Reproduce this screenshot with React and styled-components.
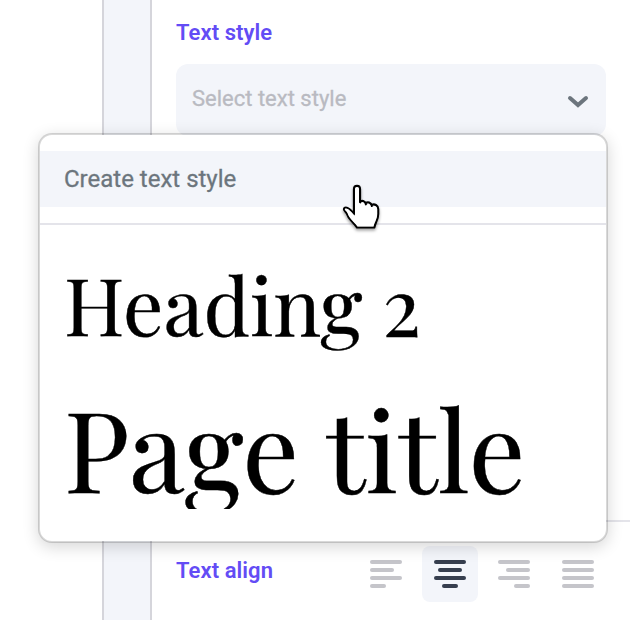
import styled, {createGlobalStyle} from 'styled-components'


const GlobalStyle = createGlobalStyle`
    * {
        box-sizing:border-box;
    }
    body{
        margin:0;
        background-color:#FFFFFF;
        font-family:Roboto, "Liberation Sans", sans-serif;
    }
`;
const Page = styled.div`
    position:relative;
    display:grid;
    grid-template-columns:102px 50px 1fr;
    width:630px;
    height:620px;
    overflow:hidden;
`;
const Gutter = styled.div`
    grid-column:2;
    background-color:#F3F5FA;
    border-left:2px solid #D5D5DB;
    border-right:2px solid #D5D5DB;
`;
const Panel = styled.div`
    display:flex;
    flex-direction:column;
    justify-content:space-between;
`;
const Section = styled.div`
    padding:19px 24px 0px;
`;
const Label = styled.div`
    color:#634CF5;
    font-size:22px;
    font-weight:600;
    line-height:28px;
    letter-spacing:0.06px;
`;
const Select = styled.div`
    display:flex;
    align-items:center;
    justify-content:space-between;
    height:72px;
    margin-top:17px;
    padding:0px 16px;
    background-color:#F3F5FA;
    border-radius:12px;
`;
const Placeholder = styled.span`
    color:#B9BAC1;
    font-size:22px;
    line-height:28px;
    padding-bottom:2px;
    -webkit-text-stroke:0.3px currentColor;
`;
const AlignRow = styled.div`
    display:flex;
    align-items:flex-start;
    justify-content:space-between;
    height:100px;
    padding:24px 24px 0px;
    border-top:2px solid #E4E4EA;
`;
const AlignLabel = styled(Label)`
    margin-top:11px;
`;
const AlignButtons = styled.div`
    display:flex;
    gap:8px;
    margin-right:-16px;
    padding-right:16px;
`;
const AlignButton = styled.button`
    display:flex;
    flex-direction:column;
    align-items:${props => props.$align};
    gap:4px;
    width:56px;
    height:56px;
    padding:14px 12px;
    border:none;
    border-radius:8px;
    background-color:${props => props.$active ? '#F3F5FA' : 'transparent'};
    color:${props => props.$active ? '#363E4E' : '#C5C5CA'};
`;
const Line = styled.span`
    width:${props => props.$width}px;
    height:4px;
    border-radius:2px;
    background-color:currentColor;
`;
const Menu = styled.div`
    position:absolute;
    left:38px;
    top:133px;
    width:570px;
    height:410px;
    padding-top:16px;
    background-color:#FFFFFF;
    background-clip:padding-box;
    border:2px solid rgba(0,0,0,0.15);
    border-radius:14px;
    box-shadow:0px 4px 16px rgba(0,0,0,0.16);
`;
const CreateItem = styled.div`
    height:56px;
    padding:0px 24px;
    background-color:#F3F5FA;
    color:#6C757D;
    font-size:24px;
    line-height:56px;
    -webkit-text-stroke:0.3px currentColor;
`;
const StyleList = styled.div`
    display:flex;
    flex-direction:column;
    gap:29px;
    margin-top:16px;
    padding:26px 24px 32px;
    border-top:2px solid #E4E4EA;
`;
const StyleItem = styled.div`
    height:${props => props.$height}px;
    overflow:hidden;
    color:#000000;
    font-family:"Playfair Display", "Liberation Serif", serif;
    font-size:${props => props.$size}px;
    line-height:${props => props.$height}px;
    white-space:nowrap;
    -webkit-text-stroke:0.4px currentColor;
`;
const Cursor = styled.svg`
    position:absolute;
    left:330px;
    top:170px;
    filter:drop-shadow(0px 2px 1.5px rgba(0,0,0,0.4));
`;

const aligns = [
    {name:'left', align:'flex-start', lines:[32,24,32,16]},
    {name:'center', align:'center', lines:[32,24,32,16]},
    {name:'right', align:'flex-end', lines:[32,24,32,16]},
    {name:'justify', align:'center', lines:[32,32,32,32]},
]

function App() {
    return(
        <>
            <GlobalStyle/>
            <Page>
                <Gutter/>
                <Panel>
                    <Section>
                        <Label>Text style</Label>
                        <Select>
                            <Placeholder>Select text style</Placeholder>
                            <svg width="24" height="24" viewBox="0 0 24 24" fill="none" stroke="#6C757D" strokeWidth="4" strokeLinecap="round">
                                <path d="M4 10L12 17L20 10"/>
                            </svg>
                        </Select>
                    </Section>
                    <AlignRow>
                        <AlignLabel>Text align</AlignLabel>
                        <AlignButtons>
                            {aligns.map(item => (
                                <AlignButton key={item.name} $align={item.align} $active={item.name === 'center'}>
                                    {item.lines.map((width, i) => <Line key={i} $width={width}/>)}
                                </AlignButton>
                            ))}
                        </AlignButtons>
                    </AlignRow>
                </Panel>
                <Menu>
                    <CreateItem>Create text style</CreateItem>
                    <StyleList>
                        <StyleItem $size={80} $height={104}>Heading 2</StyleItem>
                        <StyleItem $size={112} $height={125}>Page title</StyleItem>
                    </StyleList>
                </Menu>
                <Cursor width="70" height="70" viewBox="0 0 70 70">
                    <path d="M24 44V19C24 14.8 30 14.8 30 19V32.5M30 32C31.5 30 35.2 30.6 35.8 34.5M35.8 33.2C37.5 31.5 41 32 41.8 36M41.8 34.8C44.5 33.5 48 35.2 48.2 39V44C48.2 49 45.5 52 44.3 57.5H27C23 51 18.5 49.5 16.8 43.5C16 41.5 12.5 40 14.5 38C17.5 36.3 20.5 39.5 24 44" fill="none" stroke="#000000" strokeWidth="2.2" strokeLinejoin="round" strokeLinecap="round"/>
                    <path d="M25 45V19C25 16.2 29 16.2 29 19V32.5L30.5 34C31.5 31.5 34.5 31.5 35 35.5H36.3C37.5 33 40.5 33.5 41 37H42.3C44 34.8 47 36.2 47.2 39V44C47.2 49 44.5 52 43.5 56.5H27.5C23.5 51 19.5 49 17.7 43.5C17 41.5 14 39.8 15 38.8C17.5 37.5 20.5 41 25 46Z" fill="#FFFFFF"/>
                </Cursor>
            </Page>
        </>
    );
}
export default App
